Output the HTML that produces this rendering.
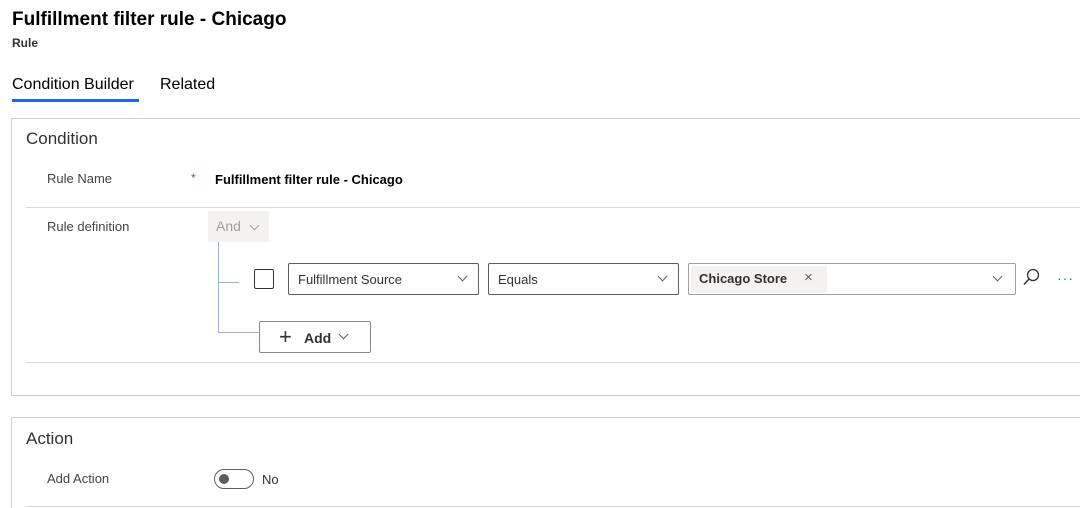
<!DOCTYPE html>
<html><head><meta charset="utf-8"><style>
*{margin:0;padding:0;box-sizing:border-box}
html,body{width:1080px;height:508px;overflow:hidden}
body{background:#fff;font-family:"Liberation Sans",sans-serif;color:#323130;position:relative}
.a{position:absolute;white-space:nowrap}
.dd{position:absolute;border:1px solid #605e5c;border-radius:2px;height:32px;background:#fff}
.dd span{position:absolute;left:9px;top:8px;font-size:13px;color:#323130}
.chev{position:absolute;width:7px;height:7px;border-right:1px solid #605e5c;border-bottom:1px solid #605e5c;transform:rotate(45deg)}
</style></head><body>
<div class="a" style="left:12px;top:9px;font-size:19px;font-weight:bold;color:#000">Fulfillment filter rule - Chicago</div>
<div class="a" style="left:12px;top:36px;font-size:12px;font-weight:bold;color:#333">Rule</div>
<div class="a" style="left:12px;top:76px;font-size:16px;color:#000">Condition Builder</div>
<div class="a" style="left:12px;top:99px;width:127px;height:3px;background:#2266e3"></div>
<div class="a" style="left:160px;top:76px;font-size:16px;color:#000">Related</div>

<div class="a" style="left:11px;top:118px;width:1069px;height:278px;border:1px solid #d2d0ce;border-right:none"></div>
<div class="a" style="left:26px;top:129px;font-size:17px;color:#323130">Condition</div>
<div class="a" style="left:47px;top:171px;font-size:13px;color:#444">Rule Name</div>
<div class="a" style="left:191px;top:171px;font-size:12px;color:#d13438">*</div>
<div class="a" style="left:215px;top:172px;font-size:13px;font-weight:bold;color:#000">Fulfillment filter rule - Chicago</div>
<div class="a" style="left:26px;top:207px;width:1054px;height:1px;background:#d9d9d9"></div>
<div class="a" style="left:47px;top:219px;font-size:13px;color:#444">Rule definition</div>
<div class="a" style="left:208px;top:211px;width:61px;height:31px;background:#f3f2f1;border-radius:2px"></div>
<div class="a" style="left:216px;top:218px;font-size:14px;color:#a19f9d">And</div>
<div class="chev" style="left:251px;top:222px;border-color:#a19f9d"></div>
<div class="a" style="left:218px;top:242px;width:1px;height:91px;background:#8ab4f8"></div>
<div class="a" style="left:218px;top:282px;width:21px;height:1px;background:#8ab4f8"></div>
<div class="a" style="left:218px;top:332px;width:41px;height:1px;background:#8ab4f8"></div>
<div class="a" style="left:254px;top:269px;width:20px;height:20px;border:1px solid #323130;border-radius:2px"></div>
<div class="dd" style="left:288px;top:263px;width:191px"><span>Fulfillment Source</span><div class="chev" style="left:170px;top:9px"></div></div>
<div class="dd" style="left:488px;top:263px;width:191px"><span>Equals</span><div class="chev" style="left:170px;top:9px"></div></div>
<div class="dd" style="left:688px;top:263px;width:328px;border-color:#a19f9d"><div style="position:absolute;left:2px;top:2px;width:136px;height:27px;background:#f3f2f1;border-radius:2px"></div><span style="left:10px;top:7px;font-weight:bold">Chicago Store</span><span style="left:115px;top:5px;font-size:15px;color:#605e5c">×</span><div class="chev" style="left:305px;top:9px"></div></div>
<svg class="a" style="left:1020px;top:266px" width="24" height="24"><circle cx="13" cy="9" r="5.5" fill="none" stroke="#333" stroke-width="1.3"/><path d="M9 13 L4 18.5" stroke="#333" stroke-width="1.5"/></svg>
<div class="a" style="left:1057px;top:270px;font-size:14px;color:#2266e3;letter-spacing:1px">···</div>
<div class="a" style="left:259px;top:321px;width:112px;height:32px;border:1px solid #8a8886;border-radius:2px"></div>
<div class="a" style="left:279px;top:326px;font-size:22px;font-weight:300;color:#323130;line-height:22px">+</div>
<div class="a" style="left:304px;top:330px;font-size:14px;font-weight:bold;color:#323130">Add</div>
<div class="chev" style="left:340px;top:331px"></div>
<div class="a" style="left:26px;top:362px;width:1054px;height:1px;background:#d9d9d9"></div>

<div class="a" style="left:11px;top:417px;width:1069px;height:91px;border-left:1px solid #d2d0ce;border-top:1px solid #d2d0ce"></div>
<div class="a" style="left:26px;top:429px;font-size:17px;color:#323130">Action</div>
<div class="a" style="left:47px;top:471px;font-size:13px;color:#444">Add Action</div>
<div class="a" style="left:214px;top:469px;width:40px;height:20px;border:1px solid #605e5c;border-radius:10px"></div>
<div class="a" style="left:219px;top:474px;width:10px;height:10px;border-radius:50%;background:#605e5c"></div>
<div class="a" style="left:262px;top:472px;font-size:13px;color:#323130">No</div>
<div class="a" style="left:26px;top:506px;width:1054px;height:1px;background:#d9d9d9"></div>
</body></html>
